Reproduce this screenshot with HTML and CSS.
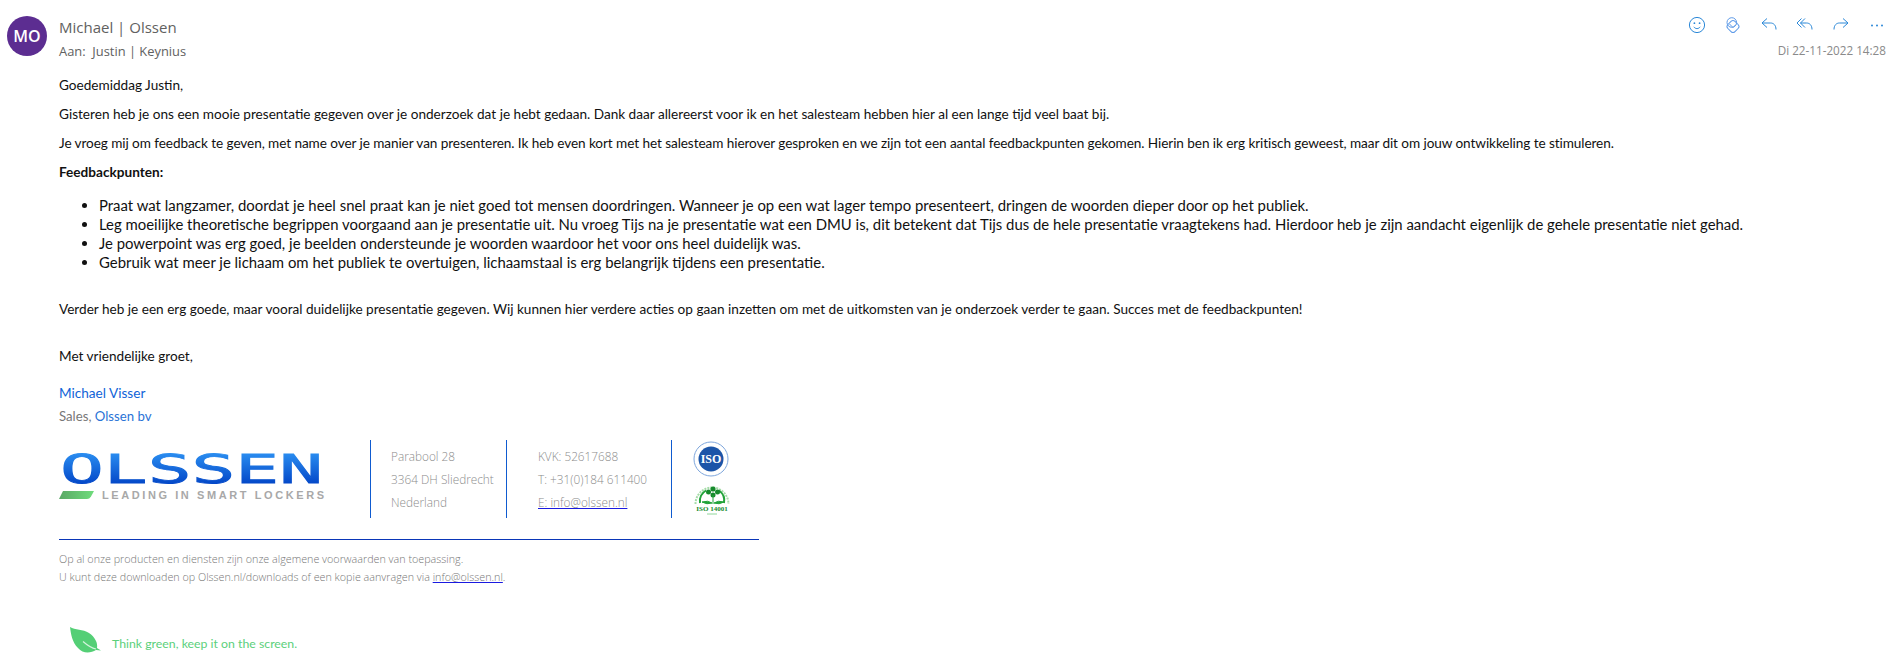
FILE: index.html
```html
<!DOCTYPE html>
<html lang="nl">
<head>
    <meta charset="UTF-8">
    <title>Michael | Olssen</title>
    <link rel="stylesheet" href="styles.css">
</head>
<body>
    <div class="header">
        <div class="avatar">MO</div>
        <div class="people">
            <div class="sender">Michael | Olssen</div>
            <div class="to">Aan:&nbsp; Justin | Keynius</div>
        </div>
        <div class="meta">
            <div class="actions">
                <svg class="icon" viewBox="0 0 20 20"><circle cx="10" cy="10" r="7.6"/><circle class="dot" cx="7.4" cy="8.2" r=".9"/><circle class="dot" cx="12.6" cy="8.2" r=".9"/><path d="M6.8 11.8c1.6 2.4 4.8 2.4 6.4 0"/></svg>
                <svg class="icon light" viewBox="0 0 20 20"><circle cx="8.800" cy="7.500" r="4.800"/><rect x="5" y="6.500" width="10" height="10" rx="2.800" transform="rotate(45 10 11.500)"/><path d="M6.500 9 10 12.500l3-3"/></svg>
                <svg class="icon" viewBox="0 0 20 20"><path d="M8 3.500 3 8l5 4.500M3 8h8.500c3.200 0 5.500 2.300 5.500 6.500"/></svg>
                <svg class="icon" viewBox="0 0 20 20"><path d="M6.500 3.500 2 8l4.500 4.500M10 3.500 5.500 8l4.500 4.500M5.500 8h6c3.200 0 5.500 2.300 5.500 6.500"/></svg>
                <svg class="icon" viewBox="0 0 20 20"><path d="M12 3.500 17 8l-5 4.500M17 8H8.500C5.300 8 3 10.300 3 14.500"/></svg>
                <svg class="icon" viewBox="0 0 20 20"><circle class="dot" cx="5" cy="10.500" r="1"/><circle class="dot" cx="10" cy="10.500" r="1"/><circle class="dot" cx="15" cy="10.500" r="1"/></svg>
            </div>
            <div class="date">Di 22-11-2022 14:28</div>
        </div>
    </div>

    <div class="mail">
        <p>Goedemiddag Justin,</p>
        <p>Gisteren heb je ons een mooie presentatie gegeven over je onderzoek dat je hebt gedaan. Dank daar allereerst voor ik en het salesteam hebben hier al een lange tijd veel baat bij.</p>
        <p class="tight">Je vroeg mij om feedback te geven, met name over je manier van presenteren. Ik heb even kort met het salesteam hierover gesproken en we zijn tot een aantal feedbackpunten gekomen. Hierin ben ik erg kritisch geweest, maar dit om jouw ontwikkeling te stimuleren.</p>
        <p><b>Feedbackpunten:</b></p>
        <ul>
            <li>Praat wat langzamer, doordat je heel snel praat kan je niet goed tot mensen doordringen. Wanneer je op een wat lager tempo presenteert, dringen de woorden dieper door op het publiek.</li>
            <li>Leg moeilijke theoretische begrippen voorgaand aan je presentatie uit. Nu vroeg Tijs na je presentatie wat een DMU is, dit betekent dat Tijs dus de hele presentatie vraagtekens had. Hierdoor heb je zijn aandacht eigenlijk de gehele presentatie niet gehad.</li>
            <li>Je powerpoint was erg goed, je beelden ondersteunde je woorden waardoor het voor ons heel duidelijk was.</li>
            <li>Gebruik wat meer je lichaam om het publiek te overtuigen, lichaamstaal is erg belangrijk tijdens een presentatie.</li>
        </ul>
        <p class="closing">Verder heb je een erg goede, maar vooral duidelijke presentatie gegeven. Wij kunnen hier verdere acties op gaan inzetten om met de uitkomsten van je onderzoek verder te gaan. Succes met de feedbackpunten!</p>
        <p class="greeting">Met vriendelijke groet,</p>

        <div class="sign-name">Michael Visser</div>
        <div class="sign-role">Sales, <span>Olssen bv</span></div>

        <div class="signature">
            <div class="logo">
                <svg width="266" height="50" viewBox="0 0 266 50">
                    <defs>
                        <linearGradient id="logoBlue" gradientUnits="userSpaceOnUse" x1="0" y1="0" x2="0" y2="31"><stop offset="0" stop-color="#2a8df0"/><stop offset="1" stop-color="#0347c8"/></linearGradient>
                        <linearGradient id="logoGreen" x1="0" y1="0" x2="1" y2="0"><stop offset="0" stop-color="#5aa865"/><stop offset="1" stop-color="#6fdc7c"/></linearGradient>
                    </defs>
                    <text class="logo-word" x="1" y="30" textLength="263" lengthAdjust="spacingAndGlyphs">OLSSEN</text>
                    <path d="M4 38h31l-3 5.500q-1.500 2.500-4 2.500H0z" fill="url(#logoGreen)"/>
                    <text class="logo-tag" x="43" y="46" textLength="222">LEADING IN SMART LOCKERS</text>
                </svg>
            </div>
            <div class="col col-address">
                <div>Parabool 28</div>
                <div>3364 DH Sliedrecht</div>
                <div>Nederland</div>
            </div>
            <div class="col col-contact">
                <div>KVK: 52617688</div>
                <div>T: +31(0)184 611400</div>
                <div><u>E: info@olssen.nl</u></div>
            </div>
            <div class="col col-certs">
                <svg width="36" height="36" viewBox="0 0 36 36">
                    <circle cx="18" cy="18" r="17" fill="#fff" stroke="#7ea6dc"/>
                    <circle cx="18" cy="18" r="12.500" fill="#1c55a8"/>
                    <text class="iso" x="18" y="22" text-anchor="middle">ISO</text>
                </svg>
                <svg width="38" height="33" viewBox="0 0 38 33">
                    <path d="M2.500 22A16.500 16.500 0 0 1 35.500 22" fill="none" stroke="#a5dca8" stroke-width="2" stroke-dasharray="2 1"/>
                    <path d="M7 21A12.500 12.500 0 0 1 13 8.500M31 21A12.500 12.500 0 0 0 26 8.500" fill="none" stroke="#22a33a" stroke-width="2"/>
                    <circle cx="20" cy="7" r="2.600" fill="#168a2c"/><circle cx="15.500" cy="10" r="2.500" fill="#168a2c"/><circle cx="24.500" cy="10" r="2.500" fill="#168a2c"/><circle cx="20" cy="13" r="2.500" fill="#168a2c"/>
                    <path d="M20 13v9M9 20q6-2 10 1-5 2-10-1zM31 20q-6-2-10 1 5 2 10-1z" fill="#22a33a" stroke="#22a33a"/>
                    <text class="iso-green" x="19" y="29" text-anchor="middle">ISO 14001</text>
                    <path d="M14 32h10" stroke="#8fd69a"/>
                </svg>
            </div>
        </div>

        <div class="rule"></div>
        <div class="legal">
            <div>Op al onze producten en diensten zijn onze algemene voorwaarden van toepassing.</div>
            <div>U kunt deze downloaden op Olssen.nl/downloads of een kopie aanvragen via <u>info@olssen.nl</u>.</div>
        </div>

        <div class="green">
            <svg width="32" height="29" viewBox="0 0 32 29">
                <path d="M1 1C6 4 14 3 20 7C26 11 29 17 28 22L32 24.500L27 24C22 27 14 28 9 22C3 16 2 8 1 1z" fill="#54cf76"/>
                <path d="M14 15.500C18 19 22 22 27 23" fill="none" stroke="#d3f3dc" stroke-width="1.200"/>
            </svg>
            <span>Think green, keep it on the screen.</span>
        </div>
    </div>
</body>
</html>
```

FILE: styles.css
```css
body {
    margin: 0;
    font-family: Lato, "Open Sans", sans-serif;
    font-size: 13.600px;
    color: #111;
    background-color: #fff;
    overflow: hidden;
}

/* Header */
.header {
    display: flex;
    padding: 16px 9px 0 7px;
    height: 51px;
    font-family: "Open Sans", sans-serif;
}

.avatar {
    width: 40px;
    height: 40px;
    border-radius: 50%;
    background-color: #5c2d91;
    color: #fff;
    font-size: 16px;
    font-weight: 600;
    line-height: 40px;
    text-align: center;
}

.people {
    flex: 1;
    margin-left: 12px;
    color: #616161;
}

.sender {
    font-size: 15px;
    line-height: 22px;
}

.to {
    margin-top: 2px;
    font-size: 12.900px;
    line-height: 22px;
}

.meta {
    text-align: right;
}

.actions {
    display: flex;
    justify-content: flex-end;
    gap: 16px;
    margin: -1px -1px 0 0;
}

.icon {
    width: 20px;
    height: 20px;
    fill: none;
    stroke: #2b88d8;
    stroke-width: 1;
}

.icon.light {
    stroke: #5f9be8;
}

.icon .dot {
    fill: #2b88d8;
    stroke: none;
}

.date {
    margin-top: 7px;
    font-size: 11.700px;
    line-height: 16px;
    color: #8a8a8a;
}

/* Mail body */
.mail {
    padding: 9px 0 0 59px;
}

p {
    margin: 0 0 10px;
    line-height: 19px;
}

.tight {
    letter-spacing: -0.080px;
}

ul {
    margin: 14px 0 28px;
    padding-left: 40px;
}

li {
    font-size: 14.900px;
    line-height: 19px;
}

.greeting {
    margin-top: 28px;
    margin-bottom: 18px;
}

.closing {
    margin-bottom: 0;
}

.sign-name {
    line-height: 19px;
    color: #0f63d8;
}

.sign-role {
    margin-top: 4px;
    line-height: 19px;
    font-size: 13.200px;
    color: #777;
}

.sign-role span {
    color: #2a73d6;
}

/* Signature */
.signature {
    display: flex;
    height: 78px;
    margin-top: 14px;
}

.logo {
    width: 311px;
    padding-top: 13px;
}

.logo-word {
    font-family: "DejaVu Sans Mono", monospace;
    font-size: 39px;
    fill: url(#logoBlue);
    stroke: url(#logoBlue);
    stroke-width: 0.800px;
}

.logo-tag {
    font-family: "Liberation Sans", sans-serif;
    font-size: 11px;
    font-weight: bold;
    fill: #a8a8a8;
}

.col {
    border-left: 1px solid #0f5bd0;
    box-sizing: border-box;
    padding-top: 5px;
    font-family: "Open Sans", sans-serif;
    font-size: 11.800px;
    font-weight: 300;
    line-height: 23px;
    color: #8c8c8c;
}

.col-address {
    width: 136px;
    padding-left: 20px;
}

.col-contact {
    width: 165px;
    padding-left: 31px;
}

.col-contact u {
    text-decoration-color: #1a1ae0;
}

.col-certs {
    display: flex;
    flex-direction: column;
    align-items: flex-start;
    gap: 5px;
    padding: 1px 0 0 21px;
}

.iso {
    font-family: "Liberation Serif", serif;
    font-size: 12px;
    font-weight: bold;
    fill: #fff;
}

.iso-green {
    font-family: "Liberation Serif", serif;
    font-size: 7px;
    font-weight: bold;
    fill: #168a2c;
}

.rule {
    width: 700px;
    height: 1px;
    margin-top: 21px;
    background-color: #0a36b8;
}

.legal {
    margin-top: 10px;
    font-family: "Open Sans", sans-serif;
    font-size: 10.750px;
    font-weight: 300;
    line-height: 18px;
    color: #777;
}

.legal u {
    text-decoration-color: #1a1ae0;
}

.green {
    display: flex;
    align-items: center;
    gap: 11px;
    margin: 40px 0 0 10px;
    color: #5bd07b;
    font-size: 12.300px;
}

.green span {
    padding-top: 6px;
}
```
